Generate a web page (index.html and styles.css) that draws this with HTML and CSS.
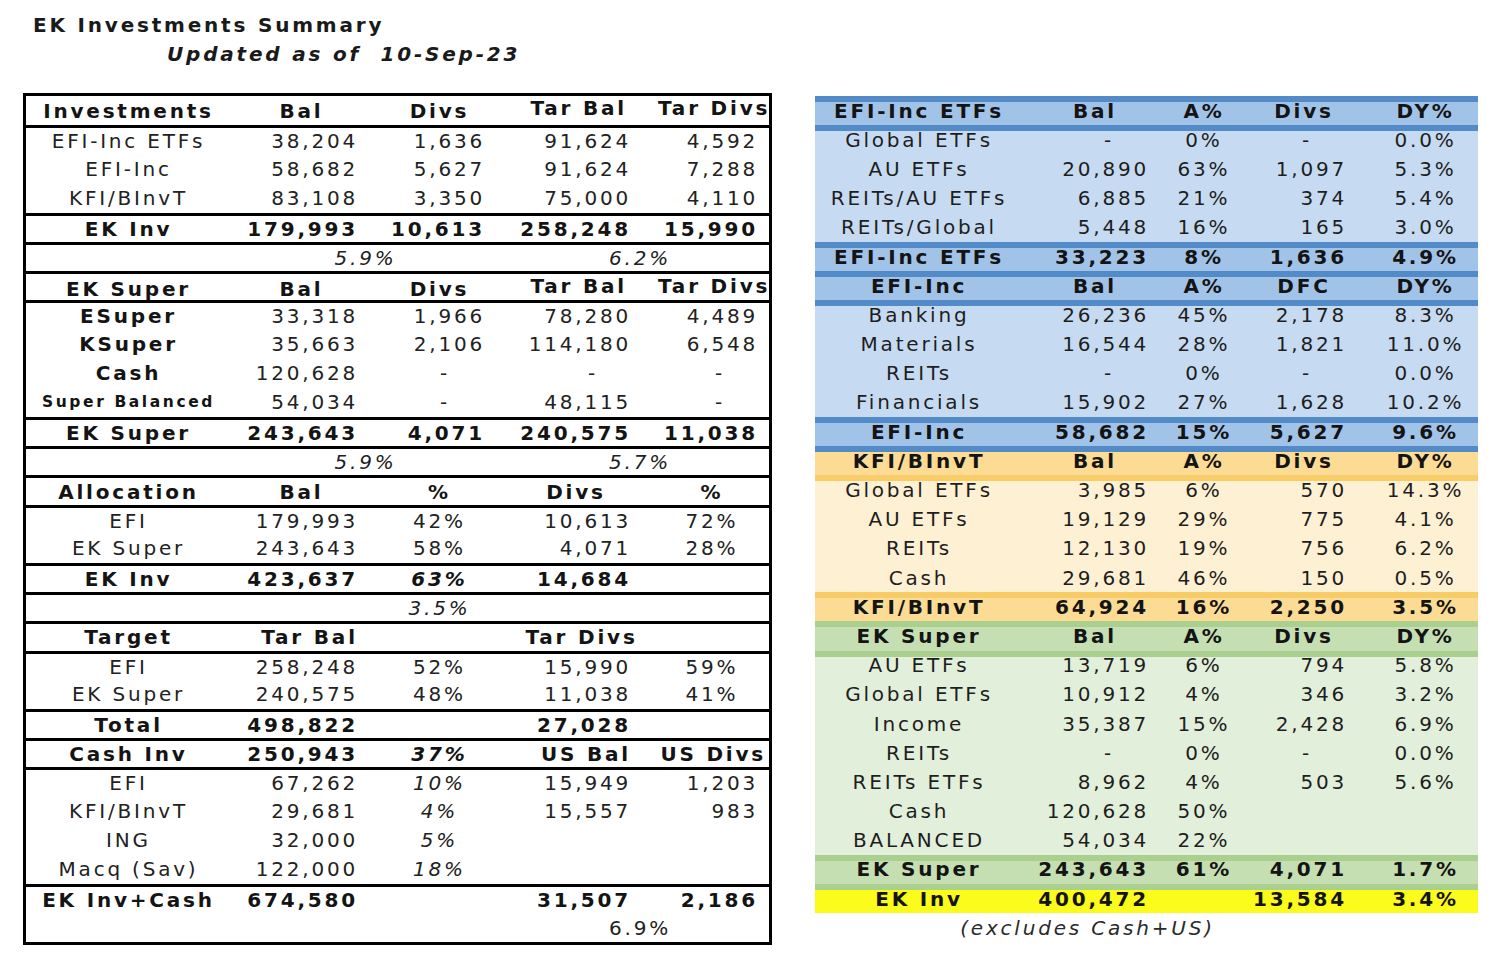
FILE: index.html
```html
<!DOCTYPE html>
<html>
<head>
<meta charset="utf-8">
<title>EK Investments Summary</title>
<link rel="stylesheet" href="styles.css">
</head>
<body>
<div class="head">
  <div class="title">EK Investments Summary</div>
  <div class="subtitle">Updated as of  10-Sep-23</div>
</div>
<div class="tables">
  <div class="ltable">
    <div class="lrow b"><div class="c">Investments</div><div class="h2">Bal</div><div class="c">Divs</div><div class="hr4">Tar Bal</div><div class="hr5">Tar Divs</div></div>
    <div class="lrow sep"><div class="c">EFI-Inc ETFs</div><div class="n2">38,204</div><div class="n3">1,636</div><div class="n4">91,624</div><div class="n5">4,592</div></div>
    <div class="lrow"><div class="c">EFI-Inc</div><div class="n2">58,682</div><div class="n3">5,627</div><div class="n4">91,624</div><div class="n5">7,288</div></div>
    <div class="lrow"><div class="c">KFI/BInvT</div><div class="n2">83,108</div><div class="n3">3,350</div><div class="n4">75,000</div><div class="n5">4,110</div></div>
    <div class="lrow sep b"><div class="c">EK Inv</div><div class="n2">179,993</div><div class="n3">10,613</div><div class="n4">258,248</div><div class="n5">15,990</div></div>
    <div class="lrow sep i"><div></div><div class="m23">5.9%</div><div class="m45">6.2%</div></div>
    <div class="lrow sep b"><div class="c">EK Super</div><div class="h2">Bal</div><div class="c">Divs</div><div class="hr4">Tar Bal</div><div class="hr5">Tar Divs</div></div>
    <div class="lrow sep"><div class="c b">ESuper</div><div class="n2">33,318</div><div class="n3">1,966</div><div class="n4">78,280</div><div class="n5">4,489</div></div>
    <div class="lrow"><div class="c b">KSuper</div><div class="n2">35,663</div><div class="n3">2,106</div><div class="n4">114,180</div><div class="n5">6,548</div></div>
    <div class="lrow"><div class="c b">Cash</div><div class="n2">120,628</div><div class="d3">-</div><div class="d4">-</div><div class="d5">-</div></div>
    <div class="lrow"><div class="c b small">Super Balanced</div><div class="n2">54,034</div><div class="d3">-</div><div class="n4">48,115</div><div class="d5">-</div></div>
    <div class="lrow sep b"><div class="c">EK Super</div><div class="n2">243,643</div><div class="n3">4,071</div><div class="n4">240,575</div><div class="n5">11,038</div></div>
    <div class="lrow sep i"><div></div><div class="m23">5.9%</div><div class="m45">5.7%</div></div>
    <div class="lrow sep b"><div class="c">Allocation</div><div class="h2">Bal</div><div class="c">%</div><div class="c4">Divs</div><div class="c5">%</div></div>
    <div class="lrow sep"><div class="c">EFI</div><div class="n2">179,993</div><div class="c">42%</div><div class="n4">10,613</div><div class="c5">72%</div></div>
    <div class="lrow"><div class="c">EK Super</div><div class="n2">243,643</div><div class="c">58%</div><div class="n4">4,071</div><div class="c5">28%</div></div>
    <div class="lrow sep b"><div class="c">EK Inv</div><div class="n2">423,637</div><div class="c i">63%</div><div class="n4">14,684</div><div></div></div>
    <div class="lrow sep"><div></div><div></div><div class="c i">3.5%</div><div></div><div></div></div>
    <div class="lrow sep b"><div class="c">Target</div><div class="c">Tar Bal</div><div></div><div class="c4t">Tar Divs</div><div></div></div>
    <div class="lrow sep"><div class="c">EFI</div><div class="n2">258,248</div><div class="c">52%</div><div class="n4">15,990</div><div class="c5">59%</div></div>
    <div class="lrow"><div class="c">EK Super</div><div class="n2">240,575</div><div class="c">48%</div><div class="n4">11,038</div><div class="c5">41%</div></div>
    <div class="lrow sep b"><div class="c">Total</div><div class="n2">498,822</div><div></div><div class="n4">27,028</div><div></div></div>
    <div class="lrow sep b"><div class="c">Cash Inv</div><div class="n2">250,943</div><div class="c i">37%</div><div class="n4">US Bal</div><div class="hr5n">US Divs</div></div>
    <div class="lrow sep"><div class="c">EFI</div><div class="n2">67,262</div><div class="c i">10%</div><div class="n4">15,949</div><div class="n5">1,203</div></div>
    <div class="lrow"><div class="c">KFI/BInvT</div><div class="n2">29,681</div><div class="c i">4%</div><div class="n4">15,557</div><div class="n5">983</div></div>
    <div class="lrow"><div class="c">ING</div><div class="n2">32,000</div><div class="c i">5%</div><div></div><div></div></div>
    <div class="lrow"><div class="c">Macq (Sav)</div><div class="n2">122,000</div><div class="c i">18%</div><div></div><div></div></div>
    <div class="lrow sep b"><div class="c">EK Inv+Cash</div><div class="n2">674,580</div><div></div><div class="n4">31,507</div><div class="n5">2,186</div></div>
    <div class="lrow"><div></div><div></div><div></div><div class="m45">6.9%</div></div>
  </div>

  <div class="rtable">
    <div class="rrow b blue-h st-b"><div class="c">EFI-Inc ETFs</div><div class="rh2">Bal</div><div class="c">A%</div><div class="c">Divs</div><div class="rc5">DY%</div></div>
    <div class="rrow blue-d st-b"><div class="c">Global ETFs</div><div class="rd2">-</div><div class="c">0%</div><div class="rd4">-</div><div class="rc5">0.0%</div></div>
    <div class="rrow blue-d"><div class="c">AU ETFs</div><div class="rn2">20,890</div><div class="c">63%</div><div class="rn4">1,097</div><div class="rc5">5.3%</div></div>
    <div class="rrow blue-d"><div class="c">REITs/AU ETFs</div><div class="rn2">6,885</div><div class="c">21%</div><div class="rn4">374</div><div class="rc5">5.4%</div></div>
    <div class="rrow blue-d"><div class="c">REITs/Global</div><div class="rn2">5,448</div><div class="c">16%</div><div class="rn4">165</div><div class="rc5">3.0%</div></div>
    <div class="rrow b blue-h st-b"><div class="c">EFI-Inc ETFs</div><div class="rn2">33,223</div><div class="c">8%</div><div class="rn4">1,636</div><div class="rc5">4.9%</div></div>
    <div class="rrow b blue-h st-b"><div class="c">EFI-Inc</div><div class="rh2">Bal</div><div class="c">A%</div><div class="c">DFC</div><div class="rc5">DY%</div></div>
    <div class="rrow blue-d st-b"><div class="c">Banking</div><div class="rn2">26,236</div><div class="c">45%</div><div class="rn4">2,178</div><div class="rc5">8.3%</div></div>
    <div class="rrow blue-d"><div class="c">Materials</div><div class="rn2">16,544</div><div class="c">28%</div><div class="rn4">1,821</div><div class="rc5">11.0%</div></div>
    <div class="rrow blue-d"><div class="c">REITs</div><div class="rd2">-</div><div class="c">0%</div><div class="rd4">-</div><div class="rc5">0.0%</div></div>
    <div class="rrow blue-d"><div class="c">Financials</div><div class="rn2">15,902</div><div class="c">27%</div><div class="rn4">1,628</div><div class="rc5">10.2%</div></div>
    <div class="rrow b blue-h st-b"><div class="c">EFI-Inc</div><div class="rn2">58,682</div><div class="c">15%</div><div class="rn4">5,627</div><div class="rc5">9.6%</div></div>
    <div class="rrow b yel-h st-b"><div class="c">KFI/BInvT</div><div class="rh2">Bal</div><div class="c">A%</div><div class="c">Divs</div><div class="rc5">DY%</div></div>
    <div class="rrow yel-d st-y"><div class="c">Global ETFs</div><div class="rn2">3,985</div><div class="c">6%</div><div class="rn4">570</div><div class="rc5">14.3%</div></div>
    <div class="rrow yel-d"><div class="c">AU ETFs</div><div class="rn2">19,129</div><div class="c">29%</div><div class="rn4">775</div><div class="rc5">4.1%</div></div>
    <div class="rrow yel-d"><div class="c">REITs</div><div class="rn2">12,130</div><div class="c">19%</div><div class="rn4">756</div><div class="rc5">6.2%</div></div>
    <div class="rrow yel-d"><div class="c">Cash</div><div class="rn2">29,681</div><div class="c">46%</div><div class="rn4">150</div><div class="rc5">0.5%</div></div>
    <div class="rrow b yel-h st-y"><div class="c">KFI/BInvT</div><div class="rn2">64,924</div><div class="c">16%</div><div class="rn4">2,250</div><div class="rc5">3.5%</div></div>
    <div class="rrow b grn-h st-g"><div class="c">EK Super</div><div class="rh2">Bal</div><div class="c">A%</div><div class="c">Divs</div><div class="rc5">DY%</div></div>
    <div class="rrow grn-d st-g"><div class="c">AU ETFs</div><div class="rn2">13,719</div><div class="c">6%</div><div class="rn4">794</div><div class="rc5">5.8%</div></div>
    <div class="rrow grn-d"><div class="c">Global ETFs</div><div class="rn2">10,912</div><div class="c">4%</div><div class="rn4">346</div><div class="rc5">3.2%</div></div>
    <div class="rrow grn-d"><div class="c">Income</div><div class="rn2">35,387</div><div class="c">15%</div><div class="rn4">2,428</div><div class="rc5">6.9%</div></div>
    <div class="rrow grn-d"><div class="c">REITs</div><div class="rd2">-</div><div class="c">0%</div><div class="rd4">-</div><div class="rc5">0.0%</div></div>
    <div class="rrow grn-d"><div class="c">REITs ETFs</div><div class="rn2">8,962</div><div class="c">4%</div><div class="rn4">503</div><div class="rc5">5.6%</div></div>
    <div class="rrow grn-d"><div class="c">Cash</div><div class="rn2">120,628</div><div class="c">50%</div><div></div><div></div></div>
    <div class="rrow grn-d"><div class="c">BALANCED</div><div class="rn2">54,034</div><div class="c">22%</div><div></div><div></div></div>
    <div class="rrow b grn-h st-g"><div class="c">EK Super</div><div class="rn2">243,643</div><div class="c">61%</div><div class="rn4">4,071</div><div class="rc5">1.7%</div></div>
    <div class="rrow b inv st-g"><div class="c">EK Inv</div><div class="rn2">400,472</div><div></div><div class="rn4">13,584</div><div class="rc5">3.4%</div></div>
    <div class="rrow"><div class="note">(excludes Cash+US)</div></div>
  </div>
</div>
</body>
</html>
```

FILE: styles.css
```css
html, body {
  margin: 0;
  padding: 0;
  background: #ffffff;
}

body {
  font-family: "DejaVu Sans", "Verdana", sans-serif;
  font-size: 20px;
  letter-spacing: 2.8px;
  color: #222222;
}

.head {
  padding: 11px 0 0 33px;
  line-height: 29px;
  font-weight: bold;
  color: #1a1a1a;
}

.subtitle {
  padding-left: 134px;
  font-style: italic;
  white-space: pre;
}

.tables {
  display: flex;
  align-items: flex-start;
  gap: 43px;
  margin-top: 24px;
  padding-left: 23px;
}

/* ---------- left table ---------- */
.ltable {
  width: 749px;
  border: 3px solid #000;
  box-sizing: border-box;
  background: #fff;
}

.lrow {
  display: grid;
  grid-template-columns: 202px 160px 100px 170px 111px;
  height: 29.2px;
  align-items: center;
  box-sizing: border-box;
  white-space: nowrap;
}

.lrow.sep {
  border-top: 3px solid #000;
}

.b {
  font-weight: bold;
  color: #141414;
}

.i {
  font-style: italic;
}

.small {
  font-size: 15.5px;
  letter-spacing: 2.6px;
}

.c {
  text-align: center;
  padding-left: 3px;
}

.h2 {
  text-align: center;
  padding-right: 13px;
}

.hr4 {
  text-align: right;
  padding-right: 31px;
  padding-bottom: 5px;
}

.hr5 {
  text-align: right;
  padding-right: 2px;
  padding-bottom: 5px;
}

.hr5n {
  text-align: right;
  padding-right: 3px;
}

.n2 { text-align: right; padding-right: 30px; }
.n3 { text-align: right; padding-right: 3px; }
.n4 { text-align: right; padding-right: 27px; }
.n5 { text-align: right; padding-right: 11px; }

.d3 { text-align: right; padding-right: 38px; }
.d4 { text-align: right; padding-right: 60px; }
.d5 { text-align: right; padding-right: 44px; }

.c4 { text-align: center; padding-left: 6px; }
.c4t { text-align: center; padding-left: 17px; }
.c5 { text-align: center; padding-right: 3px; }

.m23 {
  grid-column: span 2;
  text-align: center;
  padding-left: 15px;
}

.m45 {
  grid-column: span 2;
  text-align: center;
  padding-left: 23px;
}

/* ---------- right table ---------- */
.rtable {
  width: 663px;
  margin-top: 3px;
}

.rrow {
  display: grid;
  grid-template-columns: 205px 140px 85px 115px 118px;
  height: 29.2px;
  align-items: center;
  box-sizing: border-box;
  white-space: nowrap;
  color: #1e1e1e;
}

.rrow.b {
  color: #141414;
}

.rh2 { text-align: center; padding-left: 10px; }
.rc5 { text-align: center; padding-left: 13px; }
.rn2 { text-align: right; padding-right: 11px; }
.rn4 { text-align: right; padding-right: 13px; }
.rd2 { text-align: right; padding-right: 46px; }
.rd4 { text-align: right; padding-right: 48px; }

.blue-h { background: #a2c3e8; }
.blue-d { background: #c6dbf1; }
.yel-h  { background: #fcdc94; }
.yel-d  { background: #fef0d3; }
.grn-h  { background: #c5dfb3; }
.grn-d  { background: #e2efda; }
.inv    { background: #fbfb1c; }

.st-b { box-shadow: inset 0 6px 0 #538bc9; }
.st-y { box-shadow: inset 0 6px 0 #f8cd67; }
.st-g { box-shadow: inset 0 6px 0 #a9d08e; }

.note {
  grid-column: 1 / span 4;
  text-align: center;
  font-style: italic;
  color: #2a2a2a;
}
```
